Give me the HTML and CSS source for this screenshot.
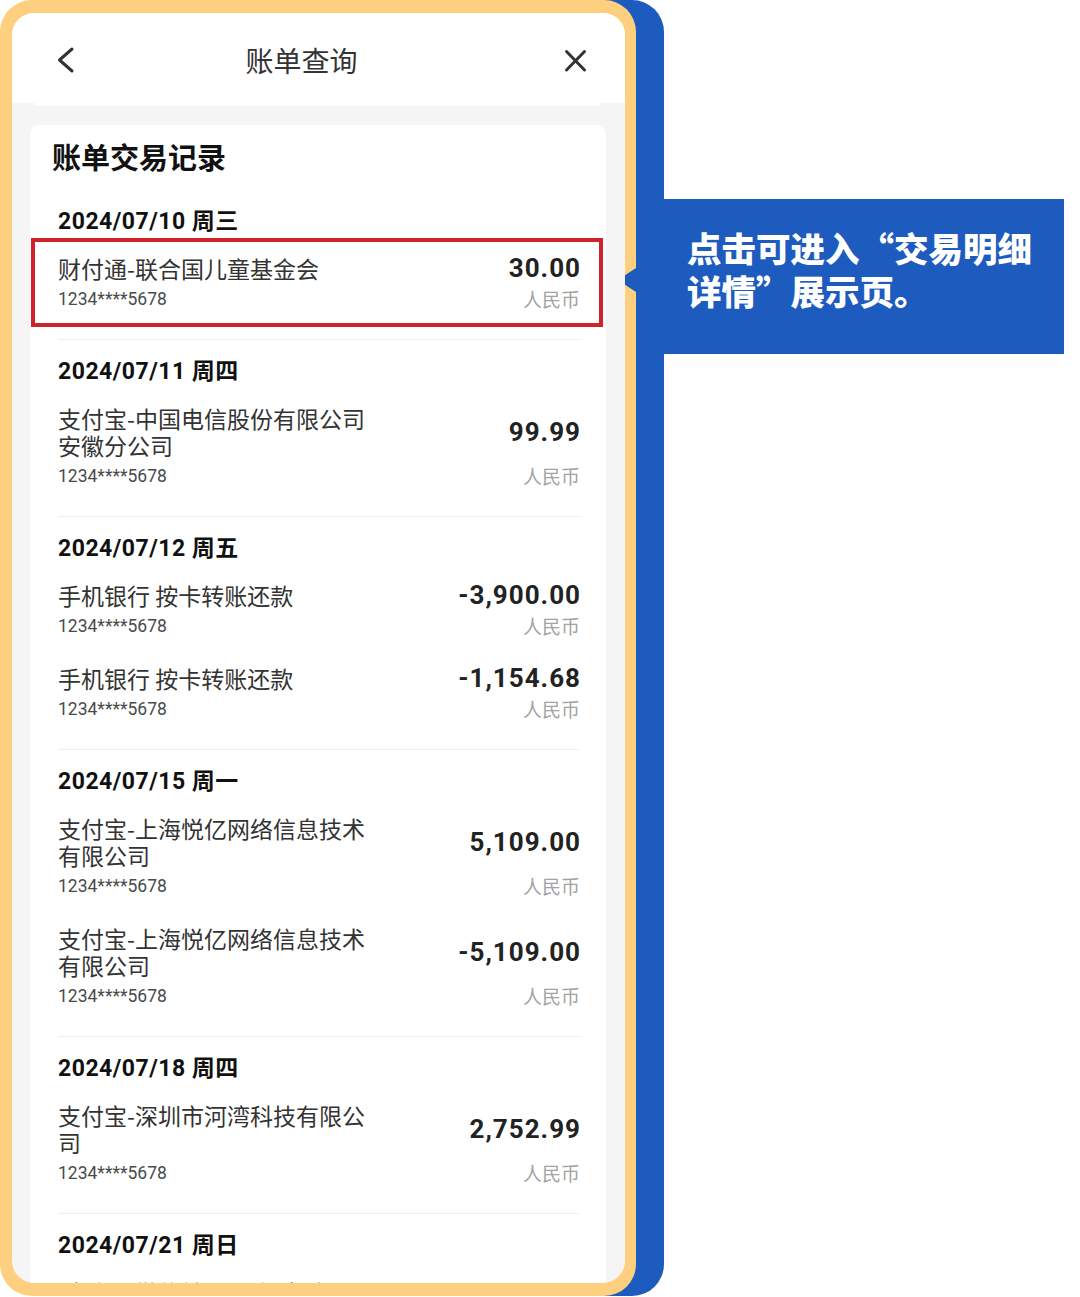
FILE: index.html
```html
<!DOCTYPE html>
<html>
<head>
	<meta charset="utf-8">
	<title>账单查询</title>
	<link rel="stylesheet" href="styles.css">
</head>
<body>
	<main class="scene">
		<section class="phone">
			<div class="screen">
				<header class="nav">
					<button class="nav-btn" aria-label="返回">
						<svg width="28" height="28" viewBox="0 0 28 28"><polyline points="16,3 3.5,14 16,25" /></svg>
					</button>
					<h1 class="nav-title">账单查询</h1>
					<button class="nav-btn" aria-label="关闭">
						<svg width="28" height="28" viewBox="0 0 28 28"><line x1="5.5" y1="5.5" x2="23.5" y2="24" /><line x1="23.5" y1="5.5" x2="5.5" y2="24" /></svg>
					</button>
				</header>

				<div class="card">
					<h2 class="card-title">账单交易记录</h2>

					<div class="day">
						<div class="date">2024/07/10 周三</div>
						<div class="txn highlight">
							<div class="txn-name">财付通-联合国儿童基金会</div>
							<div class="txn-amount">30.00</div>
							<div class="txn-card">1234****5678</div>
							<div class="txn-cur">人民币</div>
						</div>
					</div>

					<div class="day">
						<div class="date">2024/07/11 周四</div>
						<div class="txn">
							<div class="txn-name">支付宝-中国电信股份有限公司安徽分公司</div>
							<div class="txn-amount">99.99</div>
							<div class="txn-card">1234****5678</div>
							<div class="txn-cur">人民币</div>
						</div>
					</div>

					<div class="day">
						<div class="date">2024/07/12 周五</div>
						<div class="txn">
							<div class="txn-name">手机银行 按卡转账还款</div>
							<div class="txn-amount">-3,900.00</div>
							<div class="txn-card">1234****5678</div>
							<div class="txn-cur">人民币</div>
						</div>
						<div class="txn">
							<div class="txn-name">手机银行 按卡转账还款</div>
							<div class="txn-amount">-1,154.68</div>
							<div class="txn-card">1234****5678</div>
							<div class="txn-cur">人民币</div>
						</div>
					</div>

					<div class="day">
						<div class="date">2024/07/15 周一</div>
						<div class="txn">
							<div class="txn-name">支付宝-上海悦亿网络信息技术有限公司</div>
							<div class="txn-amount">5,109.00</div>
							<div class="txn-card">1234****5678</div>
							<div class="txn-cur">人民币</div>
						</div>
						<div class="txn">
							<div class="txn-name">支付宝-上海悦亿网络信息技术有限公司</div>
							<div class="txn-amount">-5,109.00</div>
							<div class="txn-card">1234****5678</div>
							<div class="txn-cur">人民币</div>
						</div>
					</div>

					<div class="day">
						<div class="date">2024/07/18 周四</div>
						<div class="txn">
							<div class="txn-name">支付宝-深圳市河湾科技有限公司</div>
							<div class="txn-amount">2,752.99</div>
							<div class="txn-card">1234****5678</div>
							<div class="txn-cur">人民币</div>
						</div>
					</div>

					<div class="day">
						<div class="date">2024/07/21 周日</div>
						<div class="txn">
							<div class="txn-name">财付通-微信转账-深圳市腾讯计算机系统有限公司</div>
							<div class="txn-amount">88.00</div>
							<div class="txn-card">1234****5678</div>
							<div class="txn-cur">人民币</div>
						</div>
					</div>
				</div>
			</div>
		</section>

		<aside class="callout">
			<p>点击可进入“交易明细<br>详情”展示页。</p>
		</aside>
	</main>
</body>
</html>
```

FILE: styles.css
```css
/* Page */

body { margin: 0; background: #fff; font-family: "Noto Sans CJK SC", sans-serif; color: #333; }
.scene { display: flex; align-items: flex-start; width: 1080px; height: 1297px; overflow: hidden; }

/* Phone frame */

.phone { flex-shrink: 0; width: 636px; height: 1296px; box-sizing: border-box; padding: 13px 11px 13px 12px; background: #ffcf80; border-radius: 32px; box-shadow: 28px 0 0 #1d5bbf; }
.screen { height: 100%; background: #f5f5f5; border-radius: 22px; overflow: hidden; }

/* Navigation bar */

.nav { position: relative; display: flex; align-items: center; height: 90px; box-sizing: border-box; padding: 4px 36px 0 44px; background: #fff; }
.nav::after { content: ""; position: absolute; left: 23px; right: 25px; bottom: -3px; height: 3px; background: #fff; border-radius: 0 0 8px 8px; }
.nav-btn { display: block; width: 28px; height: 28px; padding: 0; border: 0; background: none; }
.nav-btn svg { display: block; fill: none; stroke: #333; stroke-width: 3; stroke-linecap: round; stroke-linejoin: round; }
.nav-title { flex: 1; margin: 0 42px 0 0; text-align: center; font-size: 28px; font-weight: 400; line-height: 40px; color: #333; }

/* Card */

.card { margin: 22px 19px 0 18px; padding: 13px 26px 0 28px; background: #fff; border-radius: 10px; }
.card-title { margin: 0 0 16px -6px; font-size: 29px; font-weight: 700; line-height: 36px; color: #111; }

.day { padding: 17px 0 23px; border-bottom: 1px solid #efefef; }
.date { margin-bottom: 18px; font-family: Roboto, "Noto Sans CJK SC", sans-serif; font-size: 23px; font-weight: 700; line-height: 30px; letter-spacing: 0.5px; color: #111; }

.txn { position: relative; display: grid; grid-template-columns: 312px 1fr; align-items: center; }
.txn + .txn { margin-top: 22px; }
.txn-name { font-size: 23px; line-height: 27px; color: #333; }
.txn-amount { justify-self: end; margin-right: -1px; font-family: Roboto, sans-serif; font-size: 26px; font-weight: 700; line-height: 27px; letter-spacing: 1px; color: #222; }
.txn-card { font-family: Roboto, sans-serif; font-size: 17.5px; line-height: 34px; color: #4a4a4a; }
.txn-cur { justify-self: end; font-size: 19px; line-height: 34px; color: #a3a3a3; }

.highlight::before { content: ""; position: absolute; left: -27px; right: -23px; top: -17px; bottom: -11px; border: 4px solid #d0222a; }

/* Callout */

.callout { position: relative; flex-shrink: 0; width: 401px; height: 155px; box-sizing: border-box; margin: 199px 0 0 27px; padding: 27px 0 0 24px; background: #1d5bbf; color: #fff; }
.callout::before { content: ""; position: absolute; left: -38px; top: 69px; width: 11px; height: 24px; background: #1d5bbf; clip-path: polygon(100% 0, 0 30%, 0 70%, 100% 100%); }
.callout p { margin: 0; font-size: 34.5px; font-weight: 900; line-height: 43px; }
```
